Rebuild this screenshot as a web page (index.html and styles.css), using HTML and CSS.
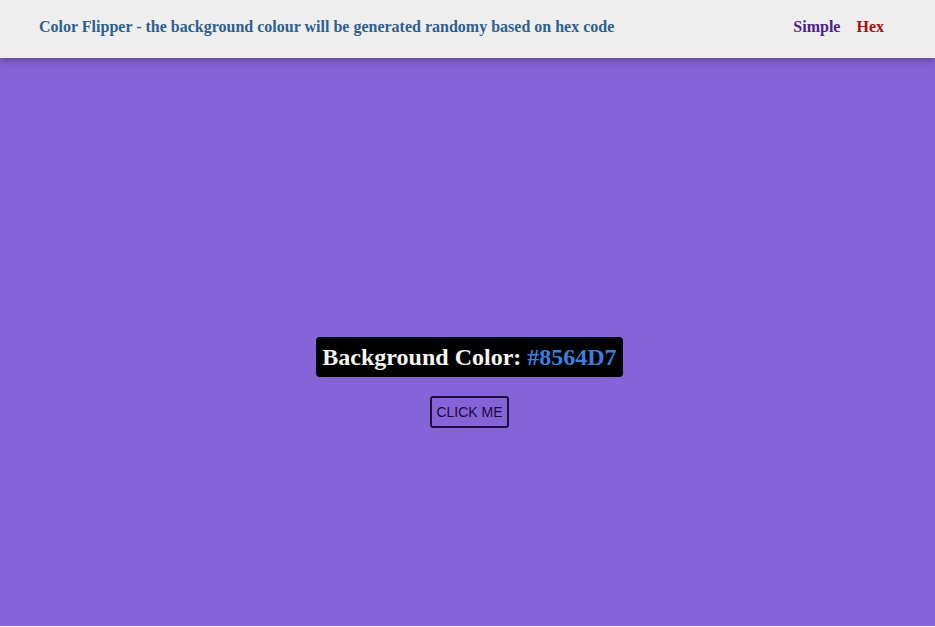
FILE: index.html
```html
<!DOCTYPE html>
<html>
<head>
<meta charset="utf-8">
<link rel="stylesheet" href="styles.css">
</head>
<body>
<nav class="nav">
  <h4 class="title">Color Flipper - the background colour will be generated randomy based on hex code</h4>
  <ul class="links">
    <li><a class="link-simple" href="#">Simple</a></li>
    <li><a class="link-hex" href="#">Hex</a></li>
  </ul>
</nav>
<main class="main">
  <h2 class="color-label">Background Color: <span class="hex">#8564D7</span></h2>
  <button class="btn">CLICK ME</button>
</main>
</body>
</html>
```
FILE: styles.css
```css
html { background: #ffffff; }
body {
  margin: 0;
  font-family: "Liberation Serif", "Times New Roman", serif;
}
.nav {
  position: relative;
  z-index: 2;
  height: 58px;
  background: #eeeeee;
  display: flex;
  align-items: center;
  justify-content: space-between;
  padding: 0 51px 4px 39px;
  box-sizing: border-box;
  box-shadow: 0 2px 8px rgba(0,0,0,0.35);
}
.title {
  margin: 0;
  font-size: 16px;
  font-weight: bold;
  color: #2f5f8f;
}
.links {
  list-style: none;
  margin: 0;
  padding: 0;
  display: flex;
  gap: 16px;
}
.links a {
  text-decoration: none;
  font-size: 16px;
  font-weight: bold;
}
.link-simple { color: #4f1f87; }
.link-hex { color: #a40e0e; }
.main {
  height: calc(100vh - 59px);
  background: #8564d7;
  display: flex;
  flex-direction: column;
  align-items: center;
  justify-content: center;
  padding-left: 4px;
  box-sizing: border-box;
}
.color-label {
  margin: 81px 0 19px;
  background: #000000;
  color: #f5f5f0;
  font-size: 24px;
  font-weight: bold;
  padding: 4px 6px;
  border-radius: 4px;
  line-height: 32px;
}
.hex { color: #3b7fdc; }
.btn {
  background: transparent;
  border: 2px solid #1e1040;
  border-radius: 3px;
  font-family: "Liberation Sans", Arial, sans-serif;
  font-size: 14px;
  color: #1a0a3a;
  width: 79px;
  height: 32px;
  padding: 0;
}
```
